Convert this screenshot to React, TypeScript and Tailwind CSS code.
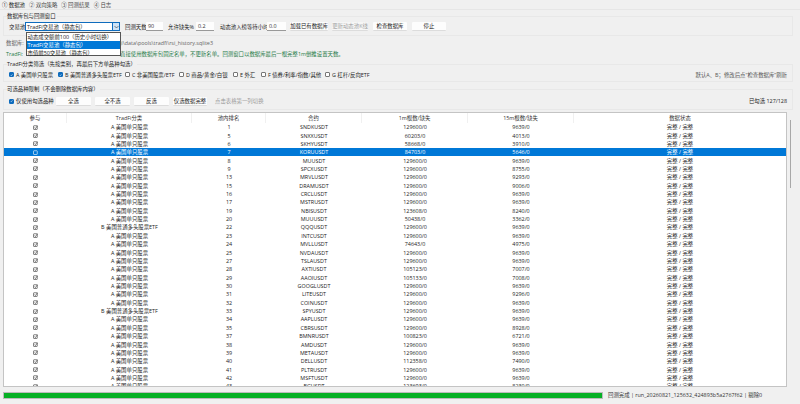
import React from 'react'

const FULL = '129600/0'
const A = 'A 美国单只股票'
const B = 'B 美国普通多头股票ETF'

const rows: [string, string, string, string, string][] = [
  [A, '1', 'SNDKUSDT', FULL, '9639/0'],
  [A, '5', 'SNXXUSDT', '60203/0', '4013/0'],
  [A, '6', 'SKHYUSDT', '58668/0', '3910/0'],
  [A, '7', 'KORUUSDT', '84703/0', '5646/0'],
  [A, '8', 'MUUSDT', FULL, '9639/0'],
  [A, '9', 'SPCXUSDT', FULL, '8755/0'],
  [A, '13', 'MRVLUSDT', FULL, '9293/0'],
  [A, '15', 'DRAMUSDT', FULL, '9006/0'],
  [A, '16', 'CRCLUSDT', FULL, '9639/0'],
  [A, '17', 'MSTRUSDT', FULL, '9639/0'],
  [A, '19', 'NBISUSDT', '123608/0', '8240/0'],
  [A, '20', 'MUUUSDT', '50438/0', '3362/0'],
  [B, '22', 'QQQUSDT', FULL, '9639/0'],
  [A, '23', 'INTCUSDT', FULL, '9639/0'],
  [A, '24', 'MVLLUSDT', '74643/0', '4975/0'],
  [A, '25', 'NVDAUSDT', FULL, '9639/0'],
  [A, '27', 'TSLAUSDT', FULL, '9639/0'],
  [A, '28', 'AXTIUSDT', '105123/0', '7007/0'],
  [A, '29', 'AAOIUSDT', '105133/0', '7008/0'],
  [A, '30', 'GOOGLUSDT', FULL, '9639/0'],
  [A, '31', 'LITEUSDT', FULL, '9296/0'],
  [A, '32', 'COINUSDT', FULL, '9639/0'],
  [B, '33', 'SPYUSDT', FULL, '9639/0'],
  [A, '34', 'AAPLUSDT', FULL, '9639/0'],
  [A, '35', 'CBRSUSDT', FULL, '8928/0'],
  [A, '37', 'BMNRUSDT', '100823/0', '6721/0'],
  [A, '38', 'AMDUSDT', FULL, '9639/0'],
  [A, '39', 'METAUSDT', FULL, '9639/0'],
  [A, '40', 'DELLUSDT', '112358/0', '7490/0'],
  [A, '41', 'PLTRUSDT', FULL, '9639/0'],
  [A, '42', 'MSFTUSDT', FULL, '9639/0'],
  [A, '43', 'BGUSDT', '123693/0', '8230/0'],
]

const gridCols = 'grid grid-cols-[63px_125px_74px_96px_106px_106px_1fr]'

function Check({ checked, color = '#333' }: { checked: boolean; color?: string }) {
  return (
    <svg width="5" height="5" viewBox="0 0 10 10" fill="none" stroke={color} strokeWidth="1.2">
      <rect x="1" y="1.5" width="7.5" height="7.5" rx="1" />
      {checked && <path d="M2.8 5 L4.8 7.2 L9.5 1" />}
    </svg>
  )
}

function FilterBox({ label, checked, className }: { label: string; checked?: boolean; className: string }) {
  return (
    <div className={`flex items-center gap-[2px] ${className}`}>
      <div
        className={`w-[5px] h-[5px] rounded-[1px] flex items-center justify-center border-[0.5px] ${
          checked ? 'bg-[#0f6cbd] border-[#0f6cbd]' : 'bg-white border-[#777]'
        }`}
      >
        {checked && (
          <svg width="4" height="4" viewBox="0 0 10 10" fill="none" stroke="white" strokeWidth="1.6">
            <path d="M2 5 L4.3 7.5 L8.5 2.5" />
          </svg>
        )}
      </div>
      <span className="whitespace-nowrap">{label}</span>
    </div>
  )
}

function Btn({ label, className, disabled }: { label: string; className: string; disabled?: boolean }) {
  return (
    <div
      className={`h-[9px] flex items-center justify-center rounded-[1px] whitespace-nowrap border-b border-[#dcdcdc] ${
        disabled ? 'bg-[#f6f6f6] text-[#a0a0a0]' : 'bg-[#fdfdfd] text-[#222]'
      } ${className}`}
    >
      {label}
    </div>
  )
}

function Field({ value, className }: { value: string; className: string }) {
  return (
    <div className={`h-[9px] flex items-center pl-[2px] bg-[#fdfdfd] border-b border-[#999] text-[#333] ${className}`}>
      {value}
    </div>
  )
}

export default function App() {
  return (
    <div className="w-[800px] h-[404px] overflow-hidden bg-[#f0f0f0] text-[#222] text-[5.4px] leading-[8px] font-['Open_Sans','Noto_Sans_CJK_SC',sans-serif] flex flex-col">
      {/* tabs */}
      <div className="h-[9px] flex items-center pl-[2px] gap-[4px] whitespace-nowrap">
        <span>① 数据池</span>
        <span className="text-[#444]">② 双向策略</span>
        <span className="text-[#444]">③ 回测结果</span>
        <span className="text-[#444]">④ 日志</span>
      </div>

      <div className="flex-1 border-t border-[#e6e6e6] pl-[3px] pr-[7px]">
        {/* group 1 */}
        <div className="mt-[6px] h-[20px] border border-[#e8e8e8] relative flex items-center pl-[5px]">
          <span className="absolute left-[3px] -top-[5px] bg-[#f0f0f0] pr-[1px]">数据库包与回测窗口</span>
          <span className="w-[16px] mt-[1px] whitespace-nowrap">交易池</span>
          <div className="mt-[1px] w-[95px] h-[9px] relative bg-white border-[0.5px] border-[#0f6cbd] flex items-center pl-[1px]">
            <span>TradFi交易池（静态包）</span>
            <div className="absolute right-0 top-0 bottom-0 w-[7px] bg-[#cfe4f7] border-l-[0.5px] border-[#0f6cbd] flex items-center justify-center">
              <svg width="5" height="4" viewBox="0 0 10 8" fill="none" stroke="#333" strokeWidth="1.2">
                <path d="M1 2 L5 6 L9 2" />
              </svg>
            </div>
            <div className="absolute left-[-0.5px] top-[8.5px] w-[95px] h-[24px] z-10 bg-white border-[0.5px] border-[#555] flex flex-col">
              <div className="h-[8px] pl-[1px] flex items-center">动态成交额前100（历史小时切换）</div>
              <div className="h-[8px] pl-[1px] flex items-center bg-[#0078d7] text-white">TradFi交易池（静态包）</div>
              <div className="h-[8px] pl-[1px] flex items-center">市值前50交易池（静态包）</div>
            </div>
          </div>
          <span className="w-[21px] ml-[5px] mt-[1px] whitespace-nowrap">回测天数</span>
          <Field value="90" className="mt-[1px] w-[17px]" />
          <span className="w-[27px] ml-[5px] mt-[1px] whitespace-nowrap">允许缺失%</span>
          <Field value="0.2" className="ml-[1px] mt-[1px] w-[18px]" />
          <span className="w-[47px] ml-[6px] mt-[1px] whitespace-nowrap">动态池入榜等待小时</span>
          <Field value="0.0" className="mt-[1px] w-[19px]" />
          <Btn label="加载已有数据库" className="ml-[4px] mt-[1px] w-[38px]" />
          <Btn label="更新动态池K线" disabled className="ml-[4px] mt-[1px] w-[36px]" />
          <Btn label="检查数据库" className="ml-[5px] mt-[1px] w-[34px]" />
          <Btn label="停止" className="ml-[5px] mt-[1px] w-[34px]" />
        </div>

        {/* database info, the open combo list covers the middle of both lines */}
        <div className="h-[28px] pl-[3px] pt-[3px] flex flex-col gap-[2px] whitespace-nowrap">
          <div className="h-[8px] flex text-[#666]">
            <span className="w-[114px]">数据库:</span>
            <span>ji\data\pools\tradfi\rsi_history.sqlite3</span>
          </div>
          <div className="h-[8px] mt-[1px] flex text-[#1f7a47]">
            <span className="w-[114px]">TradFi:</span>
            <span>直接使用数据库包固定名单，不更新名单。回测窗口以数据库最后一根完整1m倒推设置天数。</span>
          </div>
        </div>

        {/* group 2 */}
        <div className="h-[18px] border border-[#e8e8e8] relative flex items-center pr-[5px]">
          <span className="absolute left-[3px] -top-[5px] bg-[#f0f0f0] pr-[1px]">TradFi分类筛选（先按类别，再最后下方单品种勾选）</span>
          <div className="mt-[3px] flex items-center w-full">
            <FilterBox checked label="A 美国单只股票" className="ml-[5px] w-[49px]" />
            <FilterBox checked label="B 美国普通多头股票ETF" className="w-[67px]" />
            <FilterBox label="C 非美国股票/ETF" className="w-[54px]" />
            <FilterBox label="D 商品/黄金/白银" className="w-[54px]" />
            <FilterBox label="E 外汇" className="w-[28px]" />
            <FilterBox label="F 债券/利率/指数/其他" className="w-[64px]" />
            <FilterBox label="G 杠杆/反向ETF" className="w-[50px]" />
            <span className="ml-auto text-[#555]">默认A、B；修改后点“检查数据库”刷新</span>
          </div>
        </div>

        {/* group 3 */}
        <div className="mt-[7px] h-[21px] border border-[#e8e8e8] relative flex items-center pr-[5px]">
          <span className="absolute left-[3px] -top-[5px] bg-[#f0f0f0] pr-[1px]">可选品种限制（不会删除数据库内容）</span>
          <div className="mt-[3px] flex items-center w-full">
            <FilterBox checked label="仅使用勾选品种" className="ml-[5px] w-[47px]" />
            <Btn label="全选" className="w-[35px]" />
            <Btn label="全不选" className="ml-[4px] w-[35px]" />
            <Btn label="反选" className="ml-[4px] w-[35px]" />
            <Btn label="仅选数据完整" className="ml-[4px] w-[34px]" />
            <span className="ml-[8px] text-[#999]">点击表格第一列切换</span>
            <span className="ml-auto">已勾选 127/128</span>
          </div>
        </div>

        {/* table */}
        <div className="mt-[2px] h-[275px] flex">
          <div className="w-[784px] border border-[#c4c4c4] bg-white overflow-hidden">
            <div className={`${gridCols} h-[10px] text-[#333]`}>
              {['参与', 'TradFi分类', '池内排名', '合约', '1m根数/缺失', '15m根数/缺失', '数据状态'].map(h => (
                <div key={h} className="flex items-center justify-center border-r border-[#f0f0f0] last:border-r-0">
                  {h}
                </div>
              ))}
            </div>
            {rows.map(row => {
              const selected = row[2] === 'KORUUSDT'
              return (
                <div
                  key={row[2]}
                  className={`${gridCols} h-[8.37px] leading-[8px] ${selected ? 'bg-[#0078d7] text-white' : ''}`}
                >
                  <div className="flex items-center justify-center">
                    <Check checked={!selected} color={selected ? '#fff' : '#333'} />
                  </div>
                  {row.map((cell, i) => (
                    <div key={i} className="flex items-center justify-center whitespace-nowrap">
                      {cell}
                    </div>
                  ))}
                  <div className="flex items-center justify-center">完整 / 完整</div>
                </div>
              )
            })}
          </div>
          <div className="flex-1 relative">
            <div className="absolute left-[3px] top-[8px] w-[1px] h-[68px] bg-[#a8a8a8]" />
          </div>
        </div>

        {/* progress */}
        <div className="mt-[4px] flex items-center">
          <div className="w-[600px] h-[7px] border-[0.5px] border-[#bcbcbc] bg-[#06b025]" />
          <span className="ml-[5px] whitespace-nowrap text-[#333]">回测完成 | run_20260821_125632_424893b5a2767f62 | 剔除0</span>
        </div>
      </div>
    </div>
  )
}
